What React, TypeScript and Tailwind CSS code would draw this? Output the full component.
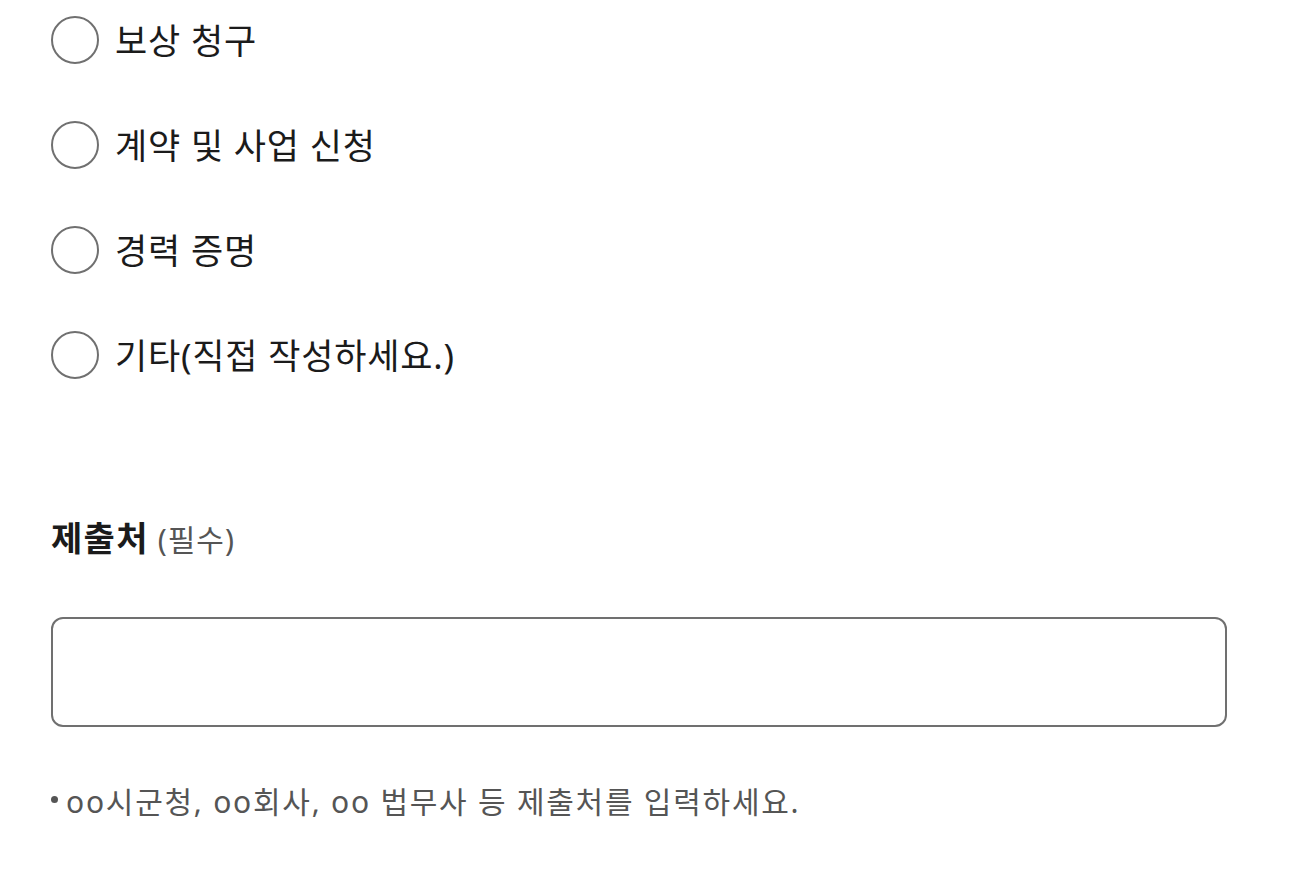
import React from "react";

const options = ["보상 청구", "계약 및 사업 신청", "경력 증명", "기타(직접 작성하세요.)"];

export default function App() {
  return (
    <div
      className="min-h-screen bg-white pl-[51px] pr-[65px] pt-[16px]"
      style={{ fontFamily: '"Noto Sans", "Noto Sans CJK KR", sans-serif' }}
    >
      <div className="flex flex-col gap-[57px]">
        {options.map((o) => (
          <label key={o} className="flex items-center gap-[16px] h-[48px]">
            <span className="w-[48px] h-[48px] rounded-full border-2 border-[#707070] bg-white shrink-0" />
            <span className="text-[35px] leading-none text-[#1b1b1b] tracking-[0.8px]">{o}</span>
          </label>
        ))}
      </div>
      <div className="mt-[137px] flex items-baseline gap-[9px]">
        <span className="text-[34px] font-bold text-[#1b1b1b] leading-[44px] tracking-[1.3px]">제출처</span>
        <span className="text-[30px] text-[#555555] leading-[44px] tracking-[1px]">(필수)</span>
      </div>
      <div className="mt-[55px] h-[110px] w-[1176px] rounded-[12px] border-2 border-[#707070]" />
      <div className="mt-[55px] flex items-start gap-[8px] text-[30px] text-[#555555] leading-[40px] tracking-[1.75px]">
        <span className="mt-[14px] w-[7px] h-[7px] rounded-full bg-[#555555] shrink-0" />
        <span>oo시군청, oo회사, oo 법무사 등 제출처를 입력하세요.</span>
      </div>
    </div>
  );
}
